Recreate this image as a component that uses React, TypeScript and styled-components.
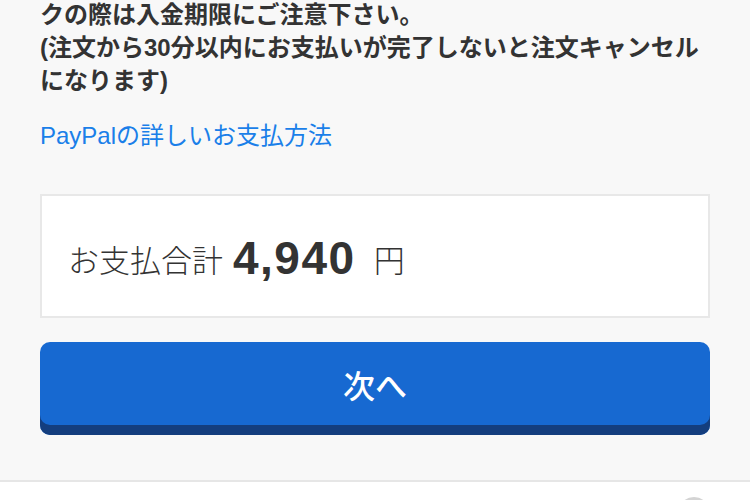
import React from 'react'
import styled, { createGlobalStyle } from 'styled-components'

const GlobalStyle = createGlobalStyle`
    html, body {
        margin: 0;
        padding: 0;
        background: #f8f8f8;
        overflow: hidden;
    }
    body {
        font-family: "Liberation Sans", "Noto Sans CJK JP", sans-serif;
        color: #333;
    }
`

const Page = styled.div`
    width: 750px;
    height: 500px;
    display: flex;
    flex-direction: column;
    overflow: hidden;
`

const Content = styled.div`
    display: flex;
    flex-direction: column;
    padding: 0 40px 45px;
`

const Notice = styled.p`
    margin: -2px 0 0;
    font-size: 24px;
    font-weight: bold;
    line-height: 33px;
    color: #333;
`

const HelpLink = styled.a`
    margin-top: 24px;
    font-size: 24px;
    line-height: 30px;
    color: #1a7fe9;
    text-decoration: none;
    cursor: pointer;
`

const TotalBox = styled.div`
    margin-top: 43px;
    height: 116px;
    box-sizing: content-box;
    background: #fff;
    border: 2px solid #e8e8e8;
    display: flex;
    align-items: center;
    padding: 4px 26px 0;
`

const TotalLabel = styled.span`
    font-size: 31px;
    font-weight: 300;
    color: #333;
    margin-right: 10px;
`

const TotalAmount = styled.span`
    font-size: 46px;
    font-weight: bold;
    letter-spacing: 1.5px;
    color: #333;
    margin-right: 18px;
`

const Unit = styled.span`
    font-size: 31px;
    font-weight: 300;
    color: #333;
`

const NextButton = styled.button`
    margin-top: 24px;
    height: 93px;
    border: none;
    border-radius: 10px;
    background: #1769d1;
    box-shadow: inset 0 -10px 0 #143e7e;
    padding: 0 0 10px;
    color: #fff;
    font-family: "Noto Sans CJK JP", sans-serif;
    font-size: 32px;
    font-weight: 500;
    cursor: pointer;
`

const Footer = styled.div`
    flex: 1;
    background: #fff;
    border-top: 2px solid #e6e6e6;
    display: flex;
    justify-content: flex-end;
    padding: 15px 40px 0 0;
`

const RoundButton = styled.div`
    width: 32px;
    height: 32px;
    flex-shrink: 0;
    border-radius: 50%;
    background: #d4d4d4;
`

export default function App() {
    return (
        <>
            <GlobalStyle />
            <Page>
                <Content>
                    <Notice>
                        クの際は入金期限にご注意下さい。
                        <br />
                        (注文から30分以内にお支払いが完了しないと注文キャンセルになります)
                    </Notice>
                    <HelpLink>PayPalの詳しいお支払方法</HelpLink>
                    <TotalBox>
                        <TotalLabel>お支払合計</TotalLabel>
                        <TotalAmount>4,940</TotalAmount>
                        <Unit>円</Unit>
                    </TotalBox>
                    <NextButton>次へ</NextButton>
                </Content>
                <Footer>
                    <RoundButton />
                </Footer>
            </Page>
        </>
    )
}
